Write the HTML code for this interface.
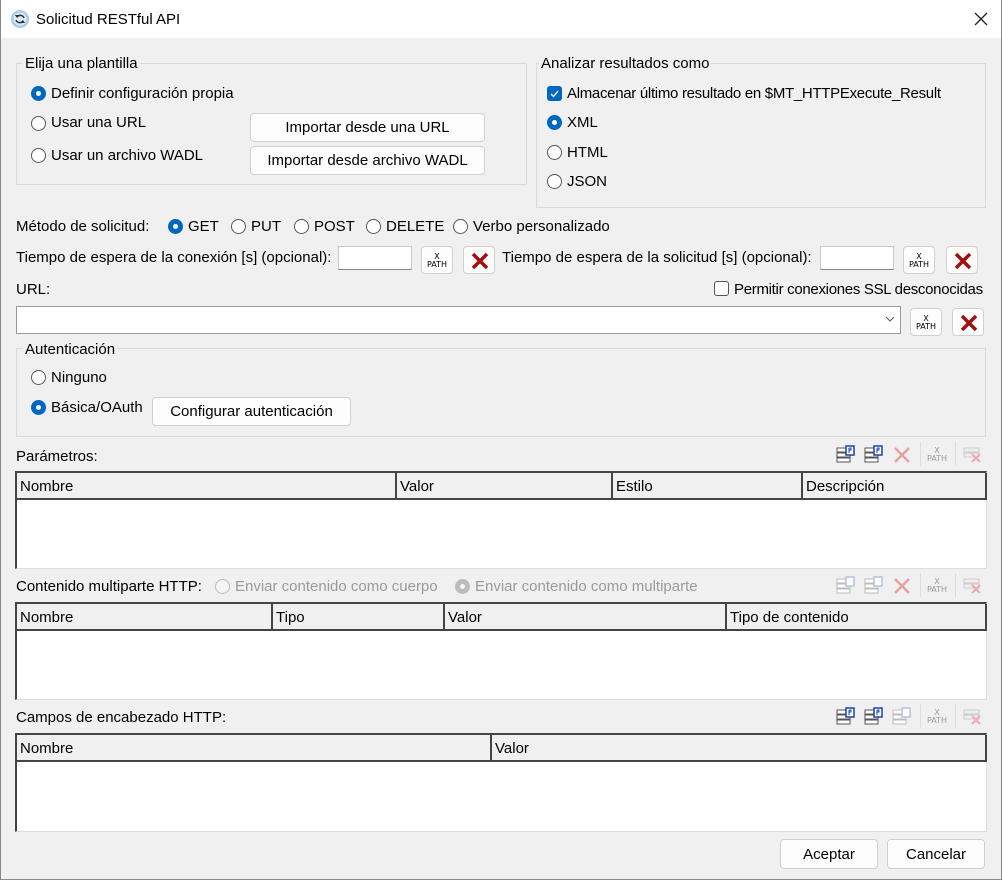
<!DOCTYPE html>
<html><head><meta charset="utf-8"><style>
*{box-sizing:border-box}
body{margin:0;width:1002px;height:880px;overflow:hidden;background:#f0f0f0;font-family:"Segoe UI","Liberation Sans",sans-serif;font-size:15px;color:#000;position:relative}
.a{position:absolute;white-space:nowrap;line-height:20px}
.r{position:absolute;width:15px;height:15px;border:1px solid #555;border-radius:50%;background:#fff}
.r.on{background:#0067c0;border-color:#0067c0}
.r.on::after{content:"";position:absolute;left:4px;top:4px;width:5px;height:5px;border-radius:50%;background:#fff}
.r.dis{border-color:#bbb;background:#f4f4f4}
.r.dis.on{background:#bbb;border-color:#bbb}
.r.dis.on::after{background:#f4f4f4}
.btn{position:absolute;background:#fdfdfd;border:1px solid #d0d0d0;border-radius:4px;text-align:center;line-height:28px;font-size:15px}
.grp{position:absolute;border:1px solid #d9d9d9}
.legend{position:absolute;background:#f0f0f0;padding:0 2px;line-height:20px}
.in{position:absolute;background:#fff;border:1px solid #c8c8c8;border-bottom:1px solid #888}
.xp{position:absolute;width:32px;height:28px;background:#fdfdfd;border:1px solid #d0d0d0;border-radius:4px;font-size:8px;line-height:8px;text-align:center;padding-top:6px;font-family:"DejaVu Sans",sans-serif}
.del{position:absolute;width:32px;height:28px;background:#fdfdfd;border:1px solid #d0d0d0;border-radius:4px}
.del svg{position:absolute;left:7px;top:5px}
.tbl{position:absolute;left:15px;width:972px;background:#fff;border-left:2px solid #444;border-top:2px solid #444;border-right:1px solid #ddd;border-bottom:1px solid #ddd}
.hd{position:absolute;top:0;height:27px;background:#f0f0f0;border-bottom:2px solid #444;border-right:2px solid #444;padding-left:3px;line-height:28px}
.dis{color:#9a9a9a}
.sep{position:absolute;width:1px;height:24px;background:#ddd}
</style></head><body>
<div style="position:absolute;left:0;top:0;width:1002px;height:38px;background:#fff"></div>
<div style="position:absolute;left:0;top:0;width:1px;height:880px;background:#888"></div>
<div style="position:absolute;right:0;top:0;width:1px;height:880px;background:#888"></div>
<svg style="position:absolute;left:10px;top:9px" width="20" height="20" viewBox="0 0 20 20"><circle cx="10" cy="10" r="9" fill="#a9cdea"/><circle cx="10" cy="10" r="6.5" fill="#dde9f3"/><path d="M7 8 A4 4 0 0 1 14 9 M13 12 A4 4 0 0 1 6 11" stroke="#333" stroke-width="1.5" fill="none"/><path d="M5 6 L7 9 L9 6Z M15 14 L13 11 L11 14Z" fill="#333"/></svg>
<div class="a" style="left:36px;top:10px;font-size:15px">Solicitud RESTful API</div>
<svg style="position:absolute;left:974px;top:12px" width="14" height="14"><path d="M1 1L13 13M13 1L1 13" stroke="#222" stroke-width="1.3"/></svg>

<div class="grp" style="left:16px;top:63px;width:511px;height:122px"></div>
<div class="legend" style="left:23px;top:54px">Elija una plantilla</div>
<div class="r on" style="left:31px;top:86px"></div><div class="a" style="left:51px;top:84px">Definir configuración propia</div>
<div class="r" style="left:31px;top:116px"></div><div class="a" style="left:51px;top:113px">Usar una URL</div>
<div class="r" style="left:31px;top:148px"></div><div class="a" style="left:51px;top:146px">Usar un archivo WADL</div>
<div class="btn" style="left:250px;top:113px;width:235px;height:29px">Importar desde una URL</div>
<div class="btn" style="left:250px;top:146px;width:235px;height:29px">Importar desde archivo WADL</div>

<div class="grp" style="left:536px;top:63px;width:450px;height:145px"></div>
<div class="legend" style="left:539px;top:54px">Analizar resultados como</div>
<div style="position:absolute;left:547px;top:86px;width:15px;height:15px;background:#0067c0;border-radius:3px"><svg width="15" height="15"><path d="M4 8L6.5 10.5L11 5" stroke="#fff" stroke-width="1.3" fill="none"/></svg></div>
<div class="a" style="left:567px;top:84px;letter-spacing:-0.3px">Almacenar último resultado en $MT_HTTPExecute_Result</div>
<div class="r on" style="left:547px;top:115px"></div><div class="a" style="left:567px;top:113px">XML</div>
<div class="r" style="left:547px;top:145px"></div><div class="a" style="left:567px;top:143px">HTML</div>
<div class="r" style="left:547px;top:174px"></div><div class="a" style="left:567px;top:172px">JSON</div>

<div class="a" style="left:16px;top:217px">Método de solicitud:</div>
<div class="r on" style="left:168px;top:219px"></div><div class="a" style="left:188px;top:217px">GET</div>
<div class="r" style="left:231px;top:219px"></div><div class="a" style="left:251px;top:217px">PUT</div>
<div class="r" style="left:294px;top:219px"></div><div class="a" style="left:314px;top:217px">POST</div>
<div class="r" style="left:366px;top:219px"></div><div class="a" style="left:386px;top:217px">DELETE</div>
<div class="r" style="left:453px;top:219px"></div><div class="a" style="left:473px;top:217px">Verbo personalizado</div>

<div class="a" style="left:16px;top:248px">Tiempo de espera de la conexión [s] (opcional):</div>
<div class="in" style="left:338px;top:246px;width:74px;height:24px"></div>
<div class="xp" style="left:421px;top:246px">X<br>PATH</div>
<div class="del" style="left:463px;top:246px"><svg width="18" height="18"><path d="M2 2L16 16M16 2L2 16" stroke="#a01010" stroke-width="3.5"/></svg></div>
<div class="a" style="left:502px;top:248px">Tiempo de espera de la solicitud [s] (opcional):</div>
<div class="in" style="left:820px;top:246px;width:74px;height:24px"></div>
<div class="xp" style="left:903px;top:246px">X<br>PATH</div>
<div class="del" style="left:946px;top:246px"><svg width="18" height="18"><path d="M2 2L16 16M16 2L2 16" stroke="#a01010" stroke-width="3.5"/></svg></div>

<div class="a" style="left:16px;top:280px">URL:</div>
<div style="position:absolute;left:714px;top:281px;width:15px;height:15px;border:1px solid #555;border-radius:3px;background:#fff"></div>
<div class="a" style="left:734px;top:280px;letter-spacing:-0.3px">Permitir conexiones SSL desconocidas</div>
<div class="in" style="left:16px;top:306px;width:885px;height:28px;border:1px solid #999"></div>
<svg style="position:absolute;left:885px;top:316px" width="10" height="7"><path d="M1 1L5 5L9 1" stroke="#555" fill="none"/></svg>
<div class="xp" style="left:910px;top:308px">X<br>PATH</div>
<div class="del" style="left:952px;top:308px"><svg width="18" height="18"><path d="M2 2L16 16M16 2L2 16" stroke="#a01010" stroke-width="3.5"/></svg></div>

<div class="grp" style="left:16px;top:348px;width:970px;height:89px"></div>
<div class="legend" style="left:23px;top:340px">Autenticación</div>
<div class="r" style="left:31px;top:370px"></div><div class="a" style="left:51px;top:368px">Ninguno</div>
<div class="r on" style="left:31px;top:400px"></div><div class="a" style="left:51px;top:398px">Básica/OAuth</div>
<div class="btn" style="left:152px;top:397px;width:199px;height:29px">Configurar autenticación</div>

<svg width="0" height="0" style="position:absolute"><defs>
<g id="add"><rect x="1" y="3" width="13" height="4" fill="#fff" stroke="#555"/><rect x="1" y="8" width="13" height="4" fill="#fff" stroke="#555"/><rect x="1" y="13" width="13" height="4" fill="#fff" stroke="#555"/><rect x="10" y="1" width="8" height="9" fill="#fff" stroke="#1a3fb0" stroke-width="1.5"/><path d="M13 3v5M13 3h2v2h-2" stroke="#1a3fb0" fill="none"/></g>
<g id="addd"><rect x="1" y="3" width="13" height="4" fill="#fff" stroke="#bbb"/><rect x="1" y="8" width="13" height="4" fill="#fff" stroke="#bbb"/><rect x="1" y="13" width="13" height="4" fill="#fff" stroke="#bbb"/><rect x="10" y="1" width="8" height="9" fill="#fff" stroke="#b8c0dc" stroke-width="1.5"/></g>
<g id="x"><path d="M3 3L17 17M17 3L3 17" stroke="#e8a0a0" stroke-width="2.5"/></g>
<g id="rx"><rect x="1" y="3" width="15" height="4" fill="#eee" stroke="#ccc"/><rect x="1" y="8" width="15" height="4" fill="#eee" stroke="#ccc"/><path d="M9 9L17 17M17 9L9 17" stroke="#eaa" stroke-width="2"/></g>
</defs></svg>

<div class="a" style="left:16px;top:447px">Parámetros:</div>
<svg style="position:absolute;left:836px;top:445px" width="20" height="20"><use href="#add"/></svg>
<svg style="position:absolute;left:864px;top:445px" width="20" height="20"><use href="#add"/></svg>
<svg style="position:absolute;left:892px;top:445px" width="20" height="20"><use href="#x"/></svg>
<div class="sep" style="left:920px;top:442px"></div>
<div class="a dis" style="left:925px;top:447px;font-size:8px;line-height:8px;text-align:center;width:24px;font-family:'DejaVu Sans',sans-serif">X<br>PATH</div>
<div class="sep" style="left:955px;top:442px"></div>
<svg style="position:absolute;left:963px;top:445px" width="20" height="20"><use href="#rx"/></svg>
<div class="tbl" style="top:471px;height:98px">
<div class="hd" style="left:0;width:380px">Nombre</div>
<div class="hd" style="left:380px;width:216px">Valor</div>
<div class="hd" style="left:596px;width:190px">Estilo</div>
<div class="hd" style="left:786px;width:184px">Descripción</div>
</div>

<div class="a" style="left:16px;top:577px">Contenido multiparte HTTP:</div>
<div class="r dis" style="left:215px;top:579px"></div><div class="a dis" style="left:235px;top:577px">Enviar contenido como cuerpo</div>
<div class="r dis on" style="left:455px;top:579px"></div><div class="a dis" style="left:475px;top:577px">Enviar contenido como multiparte</div>
<svg style="position:absolute;left:836px;top:576px" width="20" height="20"><use href="#addd"/></svg>
<svg style="position:absolute;left:864px;top:576px" width="20" height="20"><use href="#addd"/></svg>
<svg style="position:absolute;left:892px;top:576px" width="20" height="20"><use href="#x"/></svg>
<div class="sep" style="left:920px;top:573px"></div>
<div class="a dis" style="left:925px;top:578px;font-size:8px;line-height:8px;text-align:center;width:24px;font-family:'DejaVu Sans',sans-serif">X<br>PATH</div>
<div class="sep" style="left:955px;top:573px"></div>
<svg style="position:absolute;left:963px;top:576px" width="20" height="20"><use href="#rx"/></svg>
<div class="tbl" style="top:602px;height:98px">
<div class="hd" style="left:0;width:256px">Nombre</div>
<div class="hd" style="left:256px;width:172px">Tipo</div>
<div class="hd" style="left:428px;width:282px">Valor</div>
<div class="hd" style="left:710px;width:260px">Tipo de contenido</div>
</div>

<div class="a" style="left:16px;top:708px">Campos de encabezado HTTP:</div>
<svg style="position:absolute;left:836px;top:707px" width="20" height="20"><use href="#add"/></svg>
<svg style="position:absolute;left:864px;top:707px" width="20" height="20"><use href="#add"/></svg>
<svg style="position:absolute;left:892px;top:707px" width="20" height="20"><use href="#addd"/></svg>
<div class="sep" style="left:920px;top:704px"></div>
<div class="a dis" style="left:925px;top:709px;font-size:8px;line-height:8px;text-align:center;width:24px;font-family:'DejaVu Sans',sans-serif">X<br>PATH</div>
<div class="sep" style="left:955px;top:704px"></div>
<svg style="position:absolute;left:963px;top:707px" width="20" height="20"><use href="#rx"/></svg>
<div class="tbl" style="top:733px;height:99px">
<div class="hd" style="left:0;width:475px">Nombre</div>
<div class="hd" style="left:475px;width:495px">Valor</div>
</div>

<div class="btn" style="left:780px;top:839px;width:98px;height:30px;line-height:30px">Aceptar</div>
<div class="btn" style="left:887px;top:839px;width:98px;height:30px;line-height:30px">Cancelar</div>
<div style="position:absolute;left:0;top:879px;width:1002px;height:1px;background:#888"></div>
</body></html>
